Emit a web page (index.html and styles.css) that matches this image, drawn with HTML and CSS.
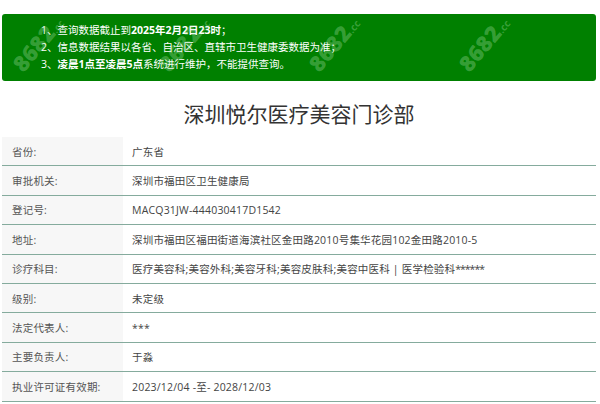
FILE: index.html
```html
<!DOCTYPE html>
<html lang="zh">
<head>
<meta charset="utf-8">
<link rel="stylesheet" href="styles.css">
</head>
<body>
<div class="page">
  <div class="notice">
    <p>1、查询数据截止到<b>2025年2月2日23时</b>；</p>
    <p>2、信息数据结果以各省、自治区、直辖市卫生健康委数据为准；</p>
    <p>3、<b>凌晨1点至凌晨5点</b>系统进行维护，不能提供查询。</p>
    <span class="wm wm1">8682<small>.cc</small></span>
    <span class="wm wm2">8682<small>.cc</small></span>
    <span class="wm wm3">8682<small>.cc</small></span>
    <span class="wm wm4">8682<small>.cc</small></span>
  </div>
  <h1 class="title">深圳悦尔医疗美容门诊部</h1>
  <div class="table">
    <div class="row"><div class="label">省份:</div><div class="value">广东省</div></div>
    <div class="row"><div class="label">审批机关:</div><div class="value">深圳市福田区卫生健康局</div></div>
    <div class="row"><div class="label">登记号:</div><div class="value">MACQ31JW-444030417D1542</div></div>
    <div class="row"><div class="label">地址:</div><div class="value">深圳市福田区福田街道海滨社区金田路2010号集华花园102金田路2010-5</div></div>
    <div class="row"><div class="label">诊疗科目:</div><div class="value">医疗美容科;美容外科;美容牙科;美容皮肤科;美容中医科 | 医学检验科<span class="stars">******</span></div></div>
    <div class="row"><div class="label">级别:</div><div class="value">未定级</div></div>
    <div class="row"><div class="label">法定代表人:</div><div class="value">***</div></div>
    <div class="row"><div class="label">主要负责人:</div><div class="value">于淼</div></div>
    <div class="row"><div class="label">执业许可证有效期:</div><div class="value">2023/12/04 -至- 2028/12/03</div></div>
  </div>
</div>
</body>
</html>
```
FILE: styles.css
```css
html, body {
  margin: 0;
  padding: 0;
  background: #fff;
}
body {
  font-family: "Open Sans", "Noto Sans CJK SC", sans-serif;
  font-size: 10.5px;
  color: #444;
}
.page {
  padding: 14px 4px 0 2px;
}
.notice {
  position: relative;
  overflow: hidden;
  background: #008000;
  border-radius: 3px;
  color: #fff;
  padding: 8px 10px 8px 39px;
  line-height: 17px;
}
.notice p {
  margin: 0;
  white-space: nowrap;
}
.notice b {
  font-weight: 700;
}
.wm {
  position: absolute;
  top: 16px;
  font-family: "Open Sans", sans-serif;
  font-weight: 800;
  font-size: 22px;
  line-height: 24px;
  letter-spacing: 0;
  color: rgba(190, 235, 190, 0.3);
  transform: rotate(-50deg);
  transform-origin: center;
  pointer-events: none;
}
.wm small {
  font-size: 10px;
  font-weight: 700;
}
.wm1 { left: 5px; }
.wm2 { left: 151px; }
.wm3 { left: 301px; }
.wm4 { left: 451px; }
.title {
  margin: 17px 0 9px;
  text-align: center;
  font-family: "Noto Sans CJK SC", sans-serif;
  font-weight: 400;
  font-size: 21px;
  line-height: 30px;
  color: #333;
}
.table {
  display: flex;
  flex-direction: column;
  letter-spacing: 0.2px;
}
.row {
  display: flex;
  height: 28.4px;
  border-bottom: 1px solid #85ab9d;
}
.label {
  width: 111px;
  padding-left: 10px;
  background: #f7f7f7;
  color: #555;
  display: flex;
  align-items: center;
}
.value {
  padding-left: 9px;
  display: flex;
  align-items: center;
  color: #444;
  white-space: nowrap;
}
.stars {
  letter-spacing: -1px;
}
```
